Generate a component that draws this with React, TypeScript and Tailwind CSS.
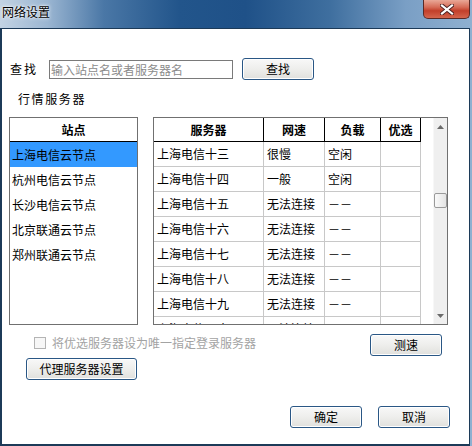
import React from 'react';

const FONT = { fontFamily: '"Noto Sans CJK SC", "Noto Sans", sans-serif' };

const sites = ['上海电信云节点', '杭州电信云节点', '长沙电信云节点', '北京联通云节点', '郑州联通云节点'];

const servers = [
  ['上海电信十三', '很慢', '空闲'],
  ['上海电信十四', '一般', '空闲'],
  ['上海电信十五', '无法连接', '－－'],
  ['上海电信十六', '无法连接', '－－'],
  ['上海电信十七', '无法连接', '－－'],
  ['上海电信十八', '无法连接', '－－'],
  ['上海电信十九', '无法连接', '－－'],
  ['上海电信二十', '无法连接', '－－'],
];

const Btn = ({ label, className = '' }: { label: string; className?: string }) => (
  <button
    className={`h-[22px] rounded-[3px] border border-[#2a5785] bg-[linear-gradient(#f8f8f8,#eeeeec_50%,#e0e0dd)] shadow-[inset_0_0_0_1px_#ffffff] text-[12px] leading-none text-black flex items-center justify-center ${className}`}
  >
    {label}
  </button>
);

export default function App() {
  return (
    <div style={FONT} className="w-[472px] h-[446px] flex flex-col overflow-hidden bg-[#8fb0d0] text-black">
      {/* title bar */}
      <div className="h-[28px] shrink-0 flex items-start justify-between bg-[linear-gradient(90deg,#c3d3e3_0%,#9bb6d2_10%,#4a77a6_22%,#22558b_38%,#1f5188_52%,#3f6f9f_70%,#7a9fc5_86%,#8fb0d0_100%)]">
        <span className="pl-[2px] pt-[5px] text-[12px] leading-[14px] [text-shadow:0_0_4px_#ffffff,0_0_2px_#ffffff]">网络设置</span>
        <div className="mr-[2px] w-[47px] h-[19px] rounded-b-[5px] border border-t-0 border-[#5a2a26] bg-[linear-gradient(#e9a897,#d66c57_40%,#c23f2a_60%,#d4654d)] flex items-center justify-center">
          <svg width="14" height="11" viewBox="0 0 14 11">
            <path d="M2 1.5 L12 9.5 M12 1.5 L2 9.5" stroke="#4a2020" strokeWidth="4" strokeLinecap="square" />
            <path d="M2 1.5 L12 9.5 M12 1.5 L2 9.5" stroke="#ffffff" strokeWidth="2.2" strokeLinecap="square" />
          </svg>
        </div>
      </div>

      {/* client area */}
      <div className="h-[418px] w-[470px] bg-white border-l-2 border-t border-r border-b-2 border-[#1c3a58] text-[12px]">
        {/* search row */}
        <div className="mt-[29px] h-[22px] flex items-center">
          <span className="ml-[8px] w-[39px] tracking-[2px] leading-[14px]">查找</span>
          <input
            className="w-[184px] h-[19px] border border-[#7a7a7a] pl-[1px] text-[12px] outline-none placeholder:text-[#8c8c8c]"
            placeholder="输入站点名或者服务器名"
          />
          <Btn label="查找" className="ml-[9px] w-[72px]" />
        </div>

        <div className="mt-[12px] ml-[16px] h-[14px] leading-[14px] tracking-[1.6px]">行情服务器</div>

        {/* lists */}
        <div className="mt-[11px] flex">
          <div className="ml-[7px] w-[129px] h-[208px] border border-[#707070] flex flex-col">
            <div className="h-[24px] border-b border-black flex items-center justify-center font-bold">站点</div>
            {sites.map((s, i) => (
              <div key={s} className={`h-[25px] flex items-center pl-[2px] ${i === 0 ? 'bg-[#3399ff]' : ''}`}>
                {s}
              </div>
            ))}
          </div>

          <div className="ml-[15px] w-[295px] h-[208px] border border-[#707070] flex">
            <div className="w-[267px] flex flex-col">
              <div className="h-[24px] border-b border-black flex font-bold">
                <div className="w-[110px] border-r border-black flex items-center justify-center">服务器</div>
                <div className="w-[61px] border-r border-black flex items-center justify-center">网速</div>
                <div className="w-[56px] border-r border-black flex items-center justify-center">负载</div>
                <div className="w-[40px] border-r border-black flex items-center justify-center">优选</div>
              </div>
              <div className="h-[182px] overflow-hidden">
                {servers.map((r) => (
                  <div key={r[0]} className="h-[25px] border-b border-[#c8c8c8] flex">
                    <div className="w-[110px] border-r border-[#c8c8c8] flex items-center pl-[3px]">{r[0]}</div>
                    <div className="w-[61px] border-r border-[#c8c8c8] flex items-center pl-[3px]">{r[1]}</div>
                    <div className="w-[56px] border-r border-[#c8c8c8] flex items-center pl-[3px]">{r[2]}</div>
                    <div className="w-[40px] border-r border-[#c8c8c8]" />
                  </div>
                ))}
              </div>
            </div>
            <div className="w-[12px]" />
            {/* scrollbar */}
            <div className="w-[14px] bg-[#efefef] border-l border-[#f7f7f7] flex flex-col">
              <div className="h-[17px] flex items-center justify-center">
                <svg width="7" height="4" viewBox="0 0 7 4"><path d="M0 4 L3.5 0 L7 4 Z" fill="#6a6a6a" /></svg>
              </div>
              <div className="flex-1">
                <div className="mt-[58px] h-[15px] rounded-[2px] border border-[#9a9a9a] bg-[linear-gradient(90deg,#fafafa,#e4e4e4)]" />
              </div>
              <div className="h-[17px] flex items-center justify-center">
                <svg width="7" height="4" viewBox="0 0 7 4"><path d="M0 0 L3.5 4 L7 0 Z" fill="#6a6a6a" /></svg>
              </div>
            </div>
          </div>
        </div>

        {/* options */}
        <div className="flex justify-between items-start">
          <div className="ml-[32px] mt-[11px] flex items-center">
            <div className="w-[12px] h-[12px] border border-[#b4b4b4] bg-[#f7f7f7]" />
            <span className="ml-[6px] leading-[14px] text-[#a3a3a3]">将优选服务器设为唯一指定登录服务器</span>
          </div>
          <Btn label="测速" className="mt-[9px] mr-[27px] w-[72px]" />
        </div>

        <Btn label="代理服务器设置" className="mt-[2px] ml-[24px] w-[111px]" />

        <div className="mt-[26px] flex justify-end">
          <Btn label="确定" className="w-[72px]" />
          <Btn label="取消" className="ml-[16px] mr-[19px] w-[72px]" />
        </div>
      </div>
    </div>
  );
}
